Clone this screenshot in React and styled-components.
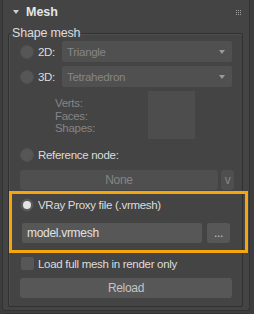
import React from 'react';
import styled, { createGlobalStyle } from 'styled-components';

const GlobalStyle = createGlobalStyle`
  html, body {
    margin: 0;
    padding: 0;
    background: #3d3d3d;
    font-family: 'Liberation Sans', Arial, sans-serif;
    font-size: 11.5px;
    letter-spacing: -0.3px;
    color: #dcdcdc;
    overflow: hidden;
  }
`;

function Radio({ checked, disabled }) {
  return (
    <RadioCircle $disabled={disabled}>{checked && <RadioDot />}</RadioCircle>
  );
}

function App() {
  return (
    <>
      <GlobalStyle />
      <Page>
        <Rollout>
          <Header>
            <Arrow />
            <Title>Mesh</Title>
            <Grip>
              {Array.from({ length: 9 }).map((_, i) => (
                <span key={i} />
              ))}
            </Grip>
          </Header>
          <Group>
            <Legend>Shape mesh</Legend>
            <Row>
              <Radio disabled />
              <Label $w={24}>2D:</Label>
              <Dropdown>
                Triangle
                <Caret />
              </Dropdown>
            </Row>
            <Row $mt={4}>
              <Radio disabled />
              <Label $w={24}>3D:</Label>
              <Dropdown>
                Tetrahedron
                <Caret />
              </Dropdown>
            </Row>
            <Stats>
              <StatLabels>
                <div>Verts:</div>
                <div>Faces:</div>
                <div>Shapes:</div>
              </StatLabels>
              <Preview />
            </Stats>
            <Row $h={16} $mt={8}>
              <Radio disabled />
              <Label>Reference node:</Label>
            </Row>
            <ButtonRow>
              <Button $w={198} $disabled>None</Button>
              <Button $w={13} $disabled>v</Button>
            </ButtonRow>
            <Highlight>
              <Row $h={16} $pl={8}>
                <Radio checked />
                <Label>VRay Proxy file (.vrmesh)</Label>
              </Row>
              <FileRow>
                <Input>model.vrmesh</Input>
                <Button $w={23}>...</Button>
              </FileRow>
            </Highlight>
            <Row $h={13} $mt={4} $pl={12}>
              <Check />
              <Label>Load full mesh in render only</Label>
            </Row>
            <ButtonRow $mt={8}>
              <Button $w={212}>Reload</Button>
            </ButtonRow>
          </Group>
        </Rollout>
        <NextRollout />
      </Page>
    </>
  );
}

export default App;

const Page = styled.div`
  width: 254px;
  height: 314px;
  padding-left: 2px;
  box-sizing: border-box;
`;

const Rollout = styled.div`
  width: 248px;
  box-sizing: border-box;
  background: #444444;
  border: 1px solid #333333;
  border-top: none;
  border-radius: 0 0 3px 3px;
  padding: 0 6px 3px 5px;
`;

const Header = styled.div`
  height: 24px;
  display: flex;
  align-items: center;
  padding-left: 5px;
`;

const Arrow = styled.div`
  width: 0;
  height: 0;
  border-left: 3px solid transparent;
  border-right: 3px solid transparent;
  border-top: 4px solid #d0d0d0;
  margin-right: 7px;
`;

const Title = styled.div`
  font-weight: bold;
  font-size: 12.5px;
  letter-spacing: 0;
  color: #e6e6e6;
  flex: 1;
`;

const Grip = styled.div`
  display: grid;
  grid-template-columns: repeat(3, 1px);
  gap: 1px;
  margin-right: 2px;
  span {
    width: 1px;
    height: 1px;
    background: #a0a0a0;
  }
`;

const Group = styled.fieldset`
  margin: 2px 0 0 0;
  padding: 0 0 8px 0;
  border: 1px solid #303030;
  box-shadow: inset 1px 1px 0 #4e4e4e;
  border-radius: 2px;
  min-width: 0;
`;

const Legend = styled.legend`
  margin-left: 2px;
  padding: 0 1px;
  font-size: 12.5px;
  letter-spacing: -0.2px;
  color: #dcdcdc;
  line-height: 15px;
`;

const Row = styled.div`
  display: flex;
  align-items: center;
  height: ${(p) => p.$h || 21}px;
  margin-top: ${(p) => p.$mt || 0}px;
  padding-left: ${(p) => (p.$pl !== undefined ? p.$pl : 11)}px;
`;

const RadioCircle = styled.div`
  width: 14px;
  height: 14px;
  border-radius: 50%;
  box-sizing: border-box;
  background: ${(p) => (p.$disabled ? '#565656' : '#5c5c5c')};
  border: 1px solid ${(p) => (p.$disabled ? '#505050' : '#4a4a4a')};
  display: flex;
  align-items: center;
  justify-content: center;
  flex-shrink: 0;
`;

const RadioDot = styled.div`
  width: 8px;
  height: 8px;
  border-radius: 50%;
  background: #e4e4e4;
`;

const Label = styled.div`
  margin-left: 4px;
  width: ${(p) => (p.$w ? `${p.$w}px` : 'auto')};
  white-space: nowrap;
  color: #dcdcdc;
`;

const Dropdown = styled.div`
  width: 170px;
  height: 21px;
  box-sizing: border-box;
  background: #505050;
  border-radius: 2px;
  color: #868686;
  padding-left: 5px;
  display: flex;
  align-items: center;
  justify-content: space-between;
`;

const Caret = styled.div`
  width: 0;
  height: 0;
  border-left: 3px solid transparent;
  border-right: 3px solid transparent;
  border-top: 4px solid #9a9a9a;
  margin-right: 7px;
`;

const Stats = styled.div`
  display: flex;
  margin-top: 4px;
  padding-left: 46px;
  height: 48px;
`;

const StatLabels = styled.div`
  padding-top: 6px;
  line-height: 12.5px;
  color: #858585;
  width: 93px;
`;

const Preview = styled.div`
  width: 47px;
  height: 48px;
  background: #4d4d4d;
`;

const ButtonRow = styled.div`
  display: flex;
  gap: 3px;
  margin-top: ${(p) => (p.$mt !== undefined ? p.$mt : 7)}px;
  padding-left: 11px;
`;

const Button = styled.div`
  width: ${(p) => p.$w}px;
  height: 20px;
  border-radius: 3px;
  background: ${(p) => (p.$disabled ? '#4f4f4f' : '#575757')};
  color: ${(p) => (p.$disabled ? '#858585' : '#c4c4c4')};
  display: flex;
  align-items: center;
  justify-content: center;
  font-size: 12px;
`;

const Highlight = styled.div`
  margin: 1px -6px 0 0;
  border: 3px solid #f4a60c;
  padding: 3px 0 7px 0;
`;

const FileRow = styled.div`
  display: flex;
  gap: 5px;
  margin-top: 10px;
  padding-left: 10px;
`;

const Input = styled.div`
  width: 180px;
  height: 20px;
  box-sizing: border-box;
  background: #575757;
  border-radius: 2px;
  color: #e2e2e2;
  padding-left: 5px;
  display: flex;
  align-items: center;
  font-size: 12px;
`;

const Check = styled.div`
  width: 13px;
  height: 13px;
  background: #575757;
  border-radius: 2px;
  flex-shrink: 0;
`;

const NextRollout = styled.div`
  margin-top: 2px;
  width: 248px;
  height: 10px;
  background: #444444;
  border: 1px solid #333333;
  border-radius: 3px 3px 0 0;
  box-sizing: border-box;
`;
